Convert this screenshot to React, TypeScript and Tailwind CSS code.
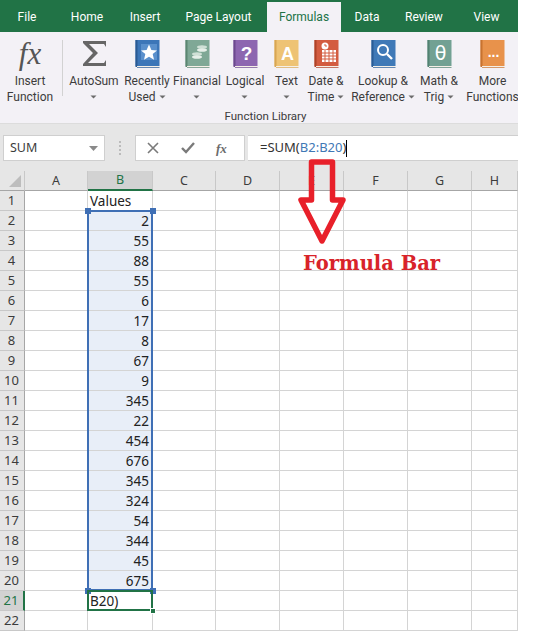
import React from "react";

const tabs: [string, number, boolean?][] = [
  ["File", 54],
  ["Home", 66],
  ["Insert", 50],
  ["Page Layout", 97],
  ["Formulas", 74, true],
  ["Data", 52],
  ["Review", 62],
  ["View", 63],
];

function Book({ color, dark, children }: { color: string; dark: string; children?: React.ReactNode }) {
  return (
    <svg width="25" height="29" viewBox="0 0 25 29">
      <rect x="0.5" y="0" width="24" height="26" fill={color} />
      <rect x="0.5" y="0" width="2" height="27" fill={dark} />
      <rect x="2" y="26" width="22.5" height="1" fill="#f5efe6" />
      <rect x="2" y="27" width="22.5" height="1" fill={dark} opacity="0.7" />
      {children}
    </svg>
  );
}

function Chevron() {
  return (
    <svg width="7" height="4" viewBox="0 0 7 4" className="inline-block">
      <path d="M0.5 0.5h6L3.5 3.5z" fill="#6b6b6b" />
    </svg>
  );
}

const icons: Record<string, React.ReactNode> = {
  fx: <span className="font-['Liberation_Serif'] italic text-[31px] leading-[28px] text-[#555555]">fx</span>,
  sigma: (
    <svg width="25" height="27" viewBox="0 0 25 27">
      <path d="M1 1h23v6l-2-3H7l9 9-10 10h16l2-3v6H1v-2l10-11L1 3z" fill="#666666" />
    </svg>
  ),
  recent: (
    <Book color="#3c76b8" dark="#2a5a93">
      <rect x="6" y="4" width="16" height="16" fill="#5a90cc" />
      <path d="M14 4.500l2.400 5.400 5.600.5-4.300 3.700 1.300 5.600-5-3-5 3 1.300-5.600L6 10.400l5.600-.5z" fill="#ffffff" />
    </Book>
  ),
  fin: (
    <Book color="#7fa896" dark="#5c8672">
      <ellipse cx="17" cy="7" rx="5" ry="1.800" fill="#cfe0d6" />
      <ellipse cx="17" cy="10" rx="5" ry="1.800" fill="#e6efe9" />
      <ellipse cx="12" cy="14" rx="5" ry="1.800" fill="#cfe0d6" />
      <ellipse cx="12" cy="17" rx="5" ry="1.800" fill="#e6efe9" />
    </Book>
  ),
  logical: (
    <Book color="#8d66b0" dark="#6c4a8e">
      <text x="13.500" y="20" textAnchor="middle" fontSize="19" fontWeight="700" fill="#ffffff" fontFamily="Liberation Sans">?</text>
    </Book>
  ),
  text: (
    <Book color="#eec374" dark="#d8a653">
      <text x="13.500" y="20" textAnchor="middle" fontSize="18" fontWeight="700" fill="#ffffff" fontFamily="Liberation Sans">A</text>
    </Book>
  ),
  date: (
    <Book color="#d35c40" dark="#ad4328">
      <circle cx="11" cy="6" r="3.500" fill="#ffffff" />
      <path d="M11 4v2h2" stroke="#d35c40" strokeWidth="1" fill="none" />
      <rect x="8" y="10" width="14" height="12" fill="#ffffff" />
      <path d="M8 13h14M8 16h14M8 19h14M11 10v12M15 10v12M19 10v12" stroke="#d35c40" strokeWidth="1" />
    </Book>
  ),
  lookup: (
    <Book color="#3f79b7" dark="#2a5d96">
      <circle cx="12" cy="10" r="5" fill="none" stroke="#ffffff" strokeWidth="2" />
      <path d="M16 14l5 5" stroke="#ffffff" strokeWidth="2.400" />
    </Book>
  ),
  math: (
    <Book color="#72a193" dark="#528272">
      <text x="13.500" y="20" textAnchor="middle" fontSize="19" fill="#ffffff" fontFamily="DejaVu Sans">θ</text>
    </Book>
  ),
  more: (
    <Book color="#e8924b" dark="#c87330">
      <text x="13.500" y="17" textAnchor="middle" fontSize="14" fontWeight="700" fill="#ffffff" fontFamily="Liberation Sans">...</text>
    </Book>
  ),
};

const items: { icon: string; w: number; lines: string[]; chev: "none" | "inline" | "below" }[] = [
  { icon: "sigma", w: 62, lines: ["AutoSum"], chev: "below" },
  { icon: "recent", w: 44, lines: ["Recently", "Used"], chev: "inline" },
  { icon: "fin", w: 56, lines: ["Financial"], chev: "below" },
  { icon: "logical", w: 40, lines: ["Logical"], chev: "below" },
  { icon: "text", w: 43, lines: ["Text"], chev: "below" },
  { icon: "date", w: 36, lines: ["Date &", "Time"], chev: "inline" },
  { icon: "lookup", w: 78, lines: ["Lookup &", "Reference"], chev: "inline" },
  { icon: "math", w: 34, lines: ["Math &", "Trig"], chev: "inline" },
  { icon: "more", w: 73, lines: ["More", "Functions"], chev: "none" },
];

function RibbonItem({ icon, w, lines, chev }: (typeof items)[number]) {
  return (
    <div style={{ width: w }} className="flex flex-col items-center shrink-0">
      <div className="h-[33px] flex items-start justify-center">{icons[icon]}</div>
      <div className="whitespace-nowrap text-center leading-4 flex flex-col items-center">
        <div>{lines[0]}</div>
        {lines[1] ? (
          <div className="flex items-center gap-[3px]">
            {lines[1]}
            {chev === "inline" && <Chevron />}
          </div>
        ) : (
          <div className="h-4 flex items-center">
            <Chevron />
          </div>
        )}
      </div>
    </div>
  );
}

const values: Record<number, string> = {
  2: "2", 3: "55", 4: "88", 5: "55", 6: "6", 7: "17", 8: "8", 9: "67", 10: "9", 11: "345",
  12: "22", 13: "454", 14: "676", 15: "345", 16: "324", 17: "54", 18: "344", 19: "45", 20: "675",
};
const cols = ["A", "B", "C", "D", "E", "F", "G", "H"];
const rows = Array.from({ length: 22 }, (_, i) => i + 1);

function Handle({ className }: { className: string }) {
  return <div className={`absolute w-[6px] h-[6px] bg-[#3f6fb5] ${className}`} />;
}

export default function App() {
  return (
    <div className="relative w-[536px] h-[631px] bg-white overflow-hidden font-['Noto_Sans',sans-serif] text-[#3c3c3c]">
      <div className="w-[518px] overflow-hidden">
        {/* Tabs */}
        <div className="flex h-8 bg-[#217346] font-['Roboto',sans-serif] text-[12px] text-white pt-[2px]">
          {tabs.map(([t, w, active]) => (
            <div
              key={t}
              style={{ width: w }}
              className={
                active
                  ? "shrink-0 flex items-center justify-center bg-[#f3f1f6] text-[#217346]"
                  : "shrink-0 flex items-center justify-center"
              }
            >
              {t}
            </div>
          ))}
        </div>
        {/* Ribbon */}
        <div className="h-[92px] bg-[#f3f1f6] font-['Roboto',sans-serif] text-[12px] pt-2 border-b border-[#dcdcdc]">
          <div className="flex h-[65px] w-[510px]">
            <div className="w-[62px] shrink-0 flex flex-col items-center pr-[2px]">
              <div className="h-[33px] flex items-start justify-center">{icons.fx}</div>
              <div className="leading-4 text-center whitespace-nowrap">
                <div>Insert</div>
                <div>Function</div>
              </div>
            </div>
            <div className="w-px h-14 bg-[#d2d2d2] shrink-0" />
            {items.map((it) => (
              <RibbonItem key={it.icon} {...it} />
            ))}
          </div>
          <div className="ml-[63px] w-[405px] text-center text-[11.5px] leading-4 mt-[3px]">Function Library</div>
        </div>
        {/* Formula bar */}
        <div className="h-[47px] bg-[#e6e6e6] pt-[11px] flex items-start text-[12px]">
          <div className="ml-[3px] w-[102px] h-[26px] bg-white border border-[#cfcfcf] flex items-center justify-between pl-[6px] pr-[6px] text-[12.5px]">
            <span>SUM</span>
            <svg width="9" height="5" viewBox="0 0 9 5"><path d="M0 0h9L4.500 5z" fill="#8a8a8a" /></svg>
          </div>
          <div className="w-[30px] h-[26px] flex flex-col items-center justify-center gap-[2px]">
            <div className="w-[2px] h-[2px] bg-[#bbbbbb]" />
            <div className="w-[2px] h-[2px] bg-[#bbbbbb]" />
            <div className="w-[2px] h-[2px] bg-[#bbbbbb]" />
            <div className="w-[2px] h-[2px] bg-[#bbbbbb]" />
          </div>
          <div className="w-[110px] h-[26px] bg-white border border-[#cfcfcf] flex items-center pl-[11px] gap-[22px]">
            <svg width="12" height="12" viewBox="0 0 12 12"><path d="M1 1l10 10M11 1L1 11" stroke="#7a7a7a" strokeWidth="1.600" /></svg>
            <svg width="14" height="12" viewBox="0 0 14 12"><path d="M1 6l4 4 8-9" stroke="#7a7a7a" strokeWidth="2.400" fill="none" /></svg>
            <span className="font-['Liberation_Serif'] italic font-bold text-[13px] leading-none text-[#6b6b6b] ml-[-1px]">fx</span>
          </div>
          <div className="ml-[3px] flex-1 h-[26px] bg-white border-y border-[#cfcfcf] flex items-center pl-[12px] text-[13px] text-[#333333]">
            <span>=SUM(</span>
            <span className="text-[#3f78b5]">B2:B20</span>
            <span>)</span>
            <span className="w-px h-[17px] bg-black" />
          </div>
        </div>
        {/* Sheet */}
        <div className="relative h-[460px]">
          <div className="grid grid-cols-[25px_63px_65px_63px_64px_64px_64px_64px_46px] auto-rows-[20px] text-[13px]">
            <div className="bg-[#e6e6e6] border-b border-[#a6a6a6] border-r border-r-[#c8c8c8] flex items-end justify-end p-[3px]">
              <svg width="12" height="12" viewBox="0 0 12 12"><path d="M12 0v12H0z" fill="#bdbdbd" /></svg>
            </div>
            {cols.map((c) => (
              <div
                key={c}
                className={
                  c === "B"
                    ? "bg-[#d2d2d2] border-b-2 border-[#217346] border-r border-r-[#c8c8c8] flex items-center justify-center pt-px text-[#217346] text-[12.5px]"
                    : "bg-[#e6e6e6] border-b border-[#a6a6a6] border-r border-r-[#c8c8c8] flex items-center justify-center pt-px text-[12.5px]"
                }
              >
                {c}
              </div>
            ))}
            {rows.map((r) => (
              <React.Fragment key={r}>
                <div
                  className={
                    r === 21
                      ? "bg-[#d2d2d2] border-r-2 border-r-[#217346] border-b border-[#c8c8c8] flex items-center justify-center pr-[1px] pt-px text-[#217346]"
                      : "bg-[#e6e6e6] border-r border-r-[#a6a6a6] border-b border-[#c8c8c8] flex items-center justify-center pr-[1px] pt-px"
                  }
                >
                  {r}
                </div>
                {cols.map((c) => (
                  <div
                    key={c}
                    className={
                      c === "B" && values[r]
                        ? "bg-[#e8eef8] border-r border-b border-[#d4d4d4] flex items-center justify-end pr-[3px] pt-px text-[#222222] text-[13.5px]"
                        : "border-r border-b border-[#d4d4d4] flex items-center px-[2px] pt-px text-[#222222] text-[13.5px]"
                    }
                  >
                    {c === "B" && (values[r] ?? (r === 1 ? "Values" : r === 21 ? "B20)" : ""))}
                  </div>
                ))}
              </React.Fragment>
            ))}
          </div>
          {/* Range selection */}
          <div className="absolute left-[87px] top-[39px] w-[66px] h-[381px] border-2 border-[#3f6fb5] pointer-events-none" />
          <Handle className="left-[85px] top-[37px]" />
          <Handle className="left-[150px] top-[37px]" />
          <Handle className="left-[85px] top-[417px]" />
          <Handle className="left-[150px] top-[417px]" />
          {/* Active cell */}
          <div className="absolute left-[87px] top-[419px] w-[66px] h-[21px] border-2 border-[#217346] pointer-events-none" />
          <div className="absolute left-[150px] top-[437px] w-[6px] h-[6px] bg-[#217346] border border-white" />
        </div>
      </div>
      {/* Annotation */}
      <svg width="60" height="90" viewBox="0 0 60 90" className="absolute left-[292px] top-[156px]">
        <path d="M19.500 6H40.500V44H51L30 85L9 44H19.500Z" fill="none" stroke="#e8202a" strokeWidth="5.500" strokeLinejoin="round" />
      </svg>
      <div className="absolute left-[303px] top-[252px] font-['DejaVu_Serif',serif] font-bold text-[19.5px] leading-6 text-[#d8232a] whitespace-nowrap">
        Formula Bar
      </div>
    </div>
  );
}
